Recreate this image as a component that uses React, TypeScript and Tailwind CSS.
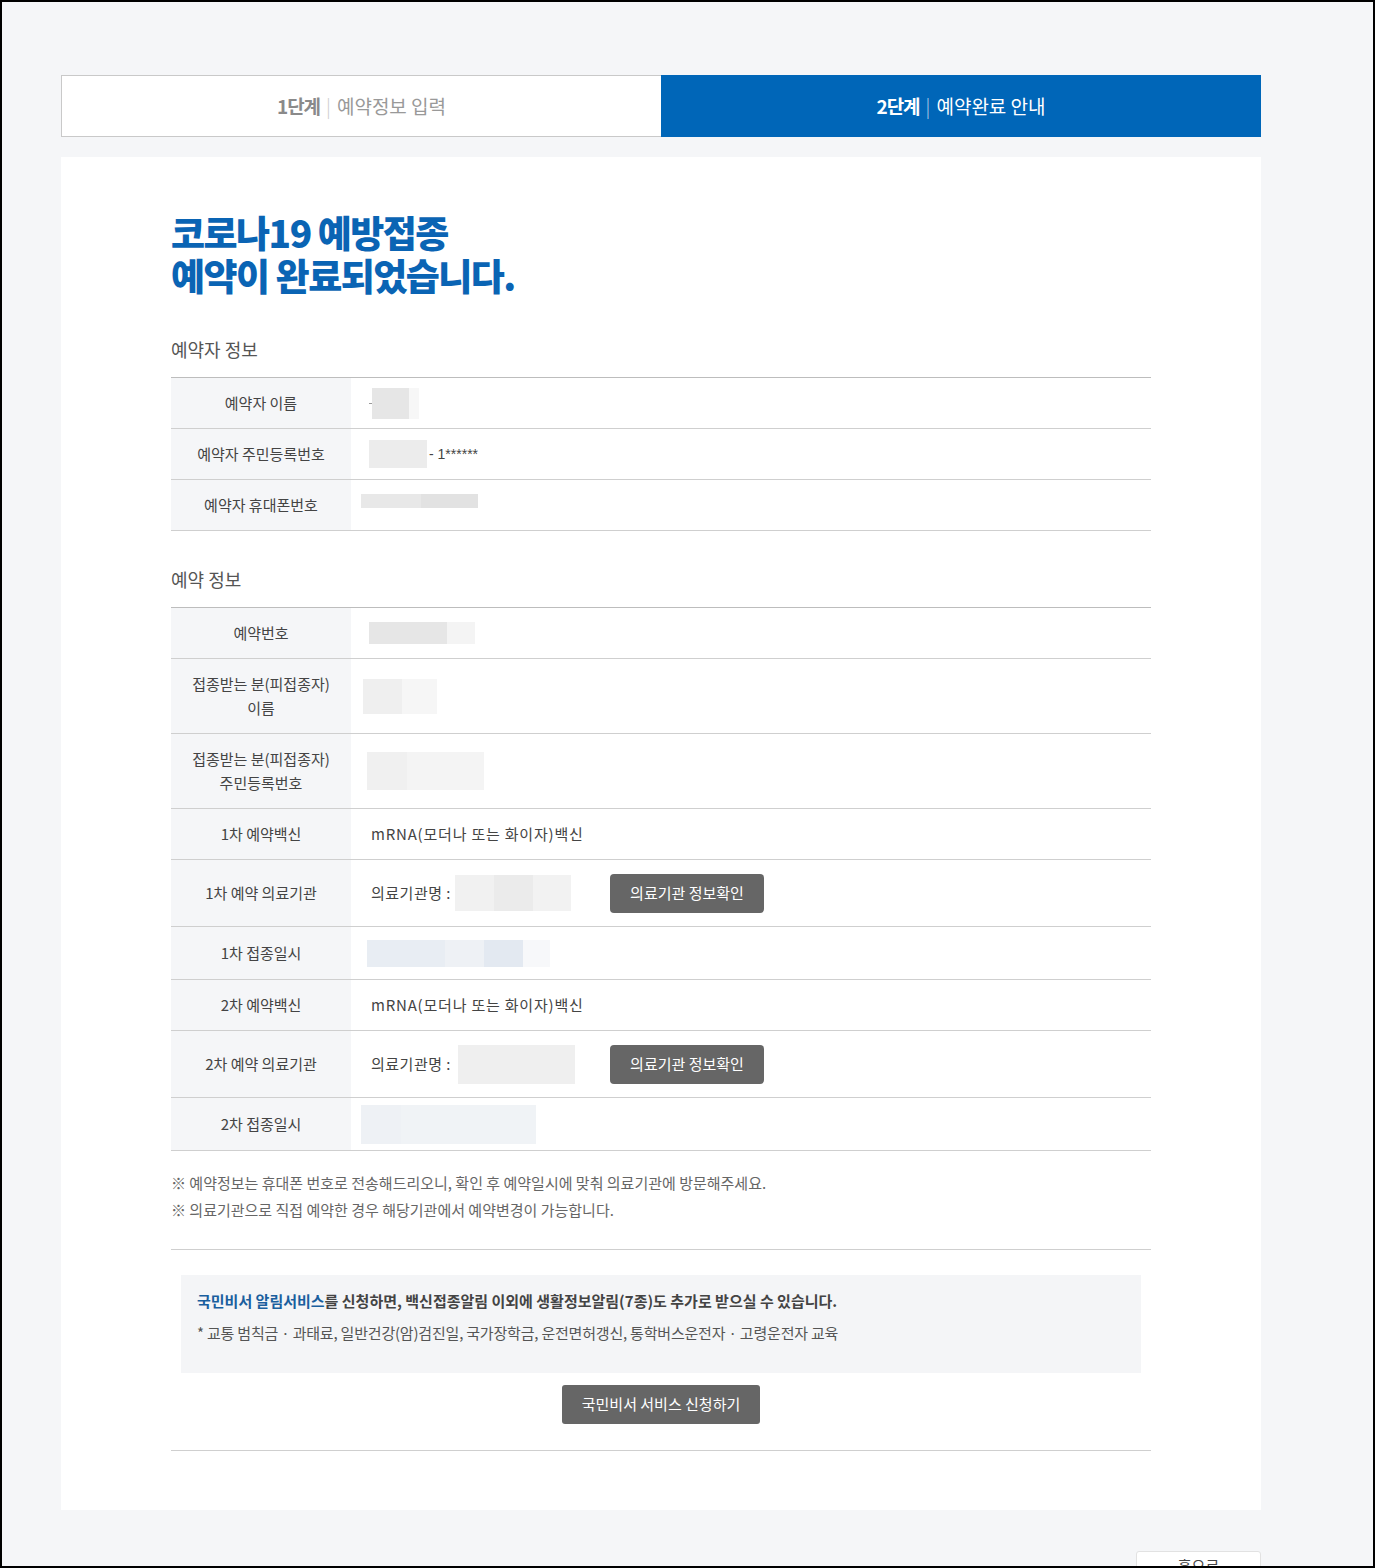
import type { ReactNode } from "react";

const KR = "font-['Noto_Sans_CJK_KR','Noto_Sans',sans-serif]";

type Block = { w: number; h: number; c: string };

function Redacted({ blocks, ml = 0 }: { blocks: Block[]; ml?: number }) {
  return (
    <div className="flex items-center" style={{ marginLeft: ml }}>
      {blocks.map((b, i) => (
        <div key={i} style={{ width: b.w, height: b.h, background: b.c }} />
      ))}
    </div>
  );
}

function Row({ label, h, children }: { label: ReactNode; h: number; children?: ReactNode }) {
  return (
    <div className="flex border-b border-[#cfcfcf]" style={{ height: h }}>
      <div className="w-[180px] shrink-0 bg-[#f5f6f8] flex items-center justify-center text-center text-[15px] leading-[24px] text-[#444]">
        {label}
      </div>
      <div className="flex-1 flex items-center pl-[20px] text-[15px] text-[#444]">{children}</div>
    </div>
  );
}

function HospitalCell({ blocks, ml }: { blocks: Block[]; ml: number }) {
  return (
    <>
      <div className="w-[239px] flex items-center">
        <span className="tracking-[0.5px]">의료기관명 :</span>
        <Redacted ml={ml} blocks={blocks} />
      </div>
      <button className="h-[39px] w-[154px] rounded-[4px] bg-[#666666] text-white text-[15px]">
        의료기관 정보확인
      </button>
    </>
  );
}

export default function App() {
  return (
    <div className={`${KR} h-[1568px] border-2 border-black bg-[#f5f6f8] overflow-hidden`}>
      <div className="ml-[59px] w-[1200px] pt-[73px]">
        {/* step tabs */}
        <div className="flex h-[62px]">
          <div className="flex-1 bg-white border border-[#c9c9c9] border-r-0 flex items-center justify-center text-[19px] text-[#999]">
            <span className="font-bold text-[#8a8a8a] tracking-[-1px]">1단계</span>
            <span className="mx-[6px] text-[#ccc] font-light">|</span>
            <span>예약정보 입력</span>
          </div>
          <div className="w-[600px] bg-[#0066b8] flex items-center justify-center text-[19px] text-white">
            <span className="font-bold tracking-[-1px]">2단계</span>
            <span className="mx-[6px] text-[#b8d2ea] font-light">|</span>
            <span>예약완료 안내</span>
          </div>
        </div>

        {/* card */}
        <div className="mt-[20px] bg-white h-[1353px] pt-[54px] px-[110px]">
          <div className="w-[980px]">
            <h1 className="text-[#0a64b4] text-[37px] leading-[43px] font-black tracking-[-1.5px]">
              코로나19 예방접종
              <br />
              예약이 완료되었습니다.
            </h1>

            <h2 className="mt-[39px] text-[18px] text-[#555] font-normal">예약자 정보</h2>
            <div className="mt-[14px] border-t border-[#bdbdbd]">
              <Row label="예약자 이름" h={51}>
                <Redacted ml={-2} blocks={[{ w: 3, h: 1, c: "#999" }, { w: 37, h: 31, c: "#e6e6e6" }, { w: 10, h: 31, c: "#f7f7f7" }]} />
              </Row>
              <Row label="예약자 주민등록번호" h={51}>
                <Redacted ml={-2} blocks={[{ w: 58, h: 28, c: "#ececec" }]} />
                <span className="ml-[2px] text-[14px] text-[#444] font-['Liberation_Sans',sans-serif]">- 1******</span>
              </Row>
              <Row label="예약자 휴대폰번호" h={51}>
                <div className="relative -ml-[10px] h-[26px] w-[120px] overflow-hidden">
                  <div className="absolute left-0 top-[2px] w-[117px] h-[14px] bg-[#e8e8e8]" />
                  <div className="absolute left-[60px] top-[2px] w-[57px] h-[14px] bg-[#e2e2e2]" />
                </div>
              </Row>
            </div>

            <h2 className="mt-[35px] text-[18px] text-[#555] font-normal">예약 정보</h2>
            <div className="mt-[14px] border-t border-[#bdbdbd]">
              <Row label="예약번호" h={51}>
                <Redacted ml={-2} blocks={[{ w: 78, h: 22, c: "#e6e6e6" }, { w: 28, h: 22, c: "#f4f4f4" }]} />
              </Row>
              <Row
                label={
                  <span>
                    접종받는 분(피접종자)
                    <br />
                    이름
                  </span>
                }
                h={75}
              >
                <Redacted ml={-8} blocks={[{ w: 39, h: 35, c: "#efefef" }, { w: 35, h: 35, c: "#f6f6f6" }]} />
              </Row>
              <Row
                label={
                  <span>
                    접종받는 분(피접종자)
                    <br />
                    주민등록번호
                  </span>
                }
                h={75}
              >
                <Redacted ml={-4} blocks={[{ w: 40, h: 38, c: "#f0f0f0" }, { w: 77, h: 38, c: "#f4f4f4" }]} />
              </Row>
              <Row label="1차 예약백신" h={51}>
                <span className="tracking-[0.8px]">mRNA(모더나 또는 화이자)백신</span>
              </Row>
              <Row label="1차 예약 의료기관" h={67}>
                <HospitalCell ml={4} blocks={[{ w: 39, h: 36, c: "#f1f1f1" }, { w: 39, h: 36, c: "#ebebeb" }, { w: 38, h: 36, c: "#f2f2f2" }]} />
              </Row>
              <Row label="1차 접종일시" h={53}>
                <Redacted ml={-4} blocks={[{ w: 78, h: 27, c: "#e8edf3" }, { w: 39, h: 27, c: "#eef1f5" }, { w: 39, h: 27, c: "#e3e9f1" }, { w: 27, h: 27, c: "#f7f8fa" }]} />
              </Row>
              <Row label="2차 예약백신" h={51}>
                <span className="tracking-[0.8px]">mRNA(모더나 또는 화이자)백신</span>
              </Row>
              <Row label="2차 예약 의료기관" h={67}>
                <HospitalCell ml={7} blocks={[{ w: 117, h: 39, c: "#efefef" }]} />
              </Row>
              <Row label="2차 접종일시" h={53}>
                <Redacted ml={-10} blocks={[{ w: 40, h: 39, c: "#eef1f5" }, { w: 135, h: 39, c: "#f0f3f6" }]} />
              </Row>
            </div>

            <div className="mt-[18px] text-[15px] leading-[27px] text-[#666]">
              <p>※ 예약정보는 휴대폰 번호로 전송해드리오니, 확인 후 예약일시에 맞춰 의료기관에 방문해주세요.</p>
              <p>※ 의료기관으로 직접 예약한 경우 해당기관에서 예약변경이 가능합니다.</p>
            </div>

            <div className="mt-[26px] border-t border-[#cfcfcf] pt-[25px] px-[10px]">
              <div className="bg-[#f4f5f7] h-[98px] pt-[15px] px-[16px]">
                <p className="text-[15px] font-bold text-[#444]">
                  <span className="text-[#1a5f9e]">국민비서 알림서비스</span>를 신청하면, 백신접종알림 이외에 생활정보알림(7종)도 추가로 받으실 수 있습니다.
                </p>
                <p className="mt-[9px] text-[15px] text-[#555] tracking-[-0.2px]">
                  * 교통 범칙금 · 과태료, 일반건강(암)검진일, 국가장학금, 운전면허갱신, 통학버스운전자 · 고령운전자 교육
                </p>
              </div>
              <div className="flex justify-center mt-[12px]">
                <button className="h-[39px] w-[198px] rounded-[3px] bg-[#666666] text-white text-[15px]">
                  국민비서 서비스 신청하기
                </button>
              </div>
            </div>
            <div className="mt-[26px] border-t border-[#cfcfcf]" />
          </div>
        </div>

        {/* bottom home button (clipped by the page edge) */}
        <div className="flex justify-end mt-[41px]">
          <div className="w-[125px] h-[40px] bg-white border border-[#e2e2e2] rounded-[3px] flex justify-center pt-[3px] text-[15px] text-[#444]">
            홈으로
          </div>
        </div>
      </div>
    </div>
  );
}
